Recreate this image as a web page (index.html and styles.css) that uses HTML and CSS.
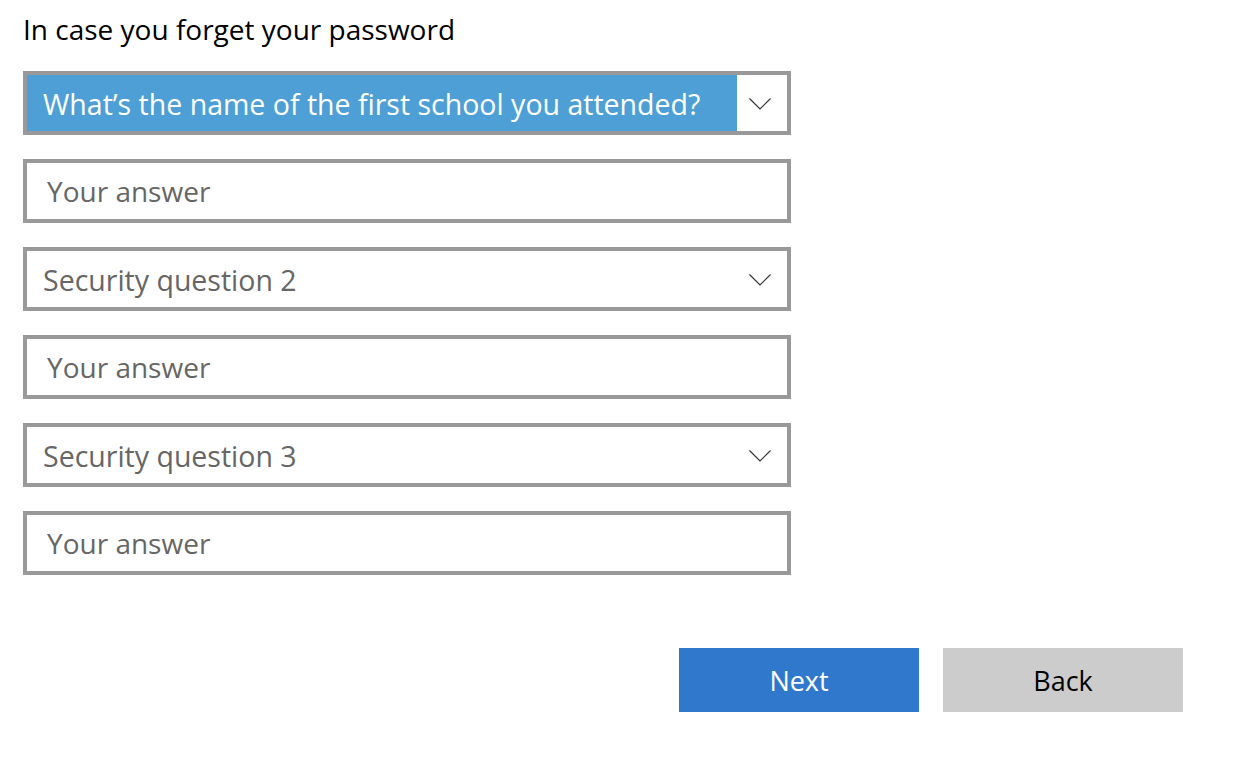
FILE: index.html
```html
<!DOCTYPE html>
<html lang="en">
<head>
<meta charset="utf-8">
<title>Security questions</title>
<link rel="stylesheet" href="styles.css">
</head>
<body>
<main class="page">
  <h1 class="title">In case you forget your password</h1>
  <div class="fields">
    <div class="field select selected">
      <span class="value">What’s the name of the first school you attended?</span>
      <span class="chev"><svg width="22" height="12" viewBox="0 0 22 12"><path d="M0.5 0.5 L11 11 L21.5 0.5" fill="none" stroke="#333" stroke-width="1.2"/></svg></span>
    </div>
    <div class="field input"><span class="ph">Your answer</span></div>
    <div class="field select">
      <span class="value">Security question 2</span>
      <span class="chev"><svg width="22" height="12" viewBox="0 0 22 12"><path d="M0.5 0.5 L11 11 L21.5 0.5" fill="none" stroke="#333" stroke-width="1.2"/></svg></span>
    </div>
    <div class="field input"><span class="ph">Your answer</span></div>
    <div class="field select">
      <span class="value">Security question 3</span>
      <span class="chev"><svg width="22" height="12" viewBox="0 0 22 12"><path d="M0.5 0.5 L11 11 L21.5 0.5" fill="none" stroke="#333" stroke-width="1.2"/></svg></span>
    </div>
    <div class="field input"><span class="ph">Your answer</span></div>
  </div>
  <div class="buttons">
    <button class="btn primary">Next</button>
    <button class="btn secondary">Back</button>
  </div>
</main>
</body>
</html>
```
FILE: styles.css
```css
html, body {
  margin: 0;
  padding: 0;
  background: #fff;
}
body {
  font-family: "Open Sans", "Noto Sans", "Liberation Sans", sans-serif;
  color: #000;
}
.page {
  width: 1160px;
  padding: 11px 0 0 23px;
  display: flex;
  flex-direction: column;
}
.title {
  margin: 0;
  font-weight: 400;
  font-size: 28px;
  line-height: 36px;
  height: 36px;
}
.fields {
  margin-top: 24px;
  width: 768px;
  display: flex;
  flex-direction: column;
  gap: 24px;
}
.field {
  box-sizing: border-box;
  height: 64px;
  border: 4px solid #999;
  display: flex;
  align-items: center;
  font-size: 28px;
  background: #fff;
}
.select .value {
  flex: 1;
  padding-left: 16px;
  padding-top: 2px;
  font-size: 28.5px;
  color: #666;
  white-space: nowrap;
  overflow: hidden;
}
.select.selected .value {
  background: #4e9fd6;
  color: #fff;
  align-self: stretch;
  display: flex;
  align-items: center;
  box-sizing: border-box;
}
.chev {
  width: 50px;
  align-self: stretch;
  display: flex;
  align-items: center;
  justify-content: center;
  padding-right: 5px;
  padding-top: 2px;
  box-sizing: border-box;
}
.chev svg {
  display: block;
}
.input .ph {
  padding-left: 20px;
  color: #666;
}
.buttons {
  margin-top: 73px;
  display: flex;
  justify-content: flex-end;
  gap: 24px;
}
.btn {
  width: 240px;
  height: 64px;
  border: none;
  font-family: inherit;
  font-size: 27px;
  padding: 0;
}
.primary {
  background: #3078cc;
  color: #fff;
}
.secondary {
  background: #cccccc;
  color: #000;
}
```
